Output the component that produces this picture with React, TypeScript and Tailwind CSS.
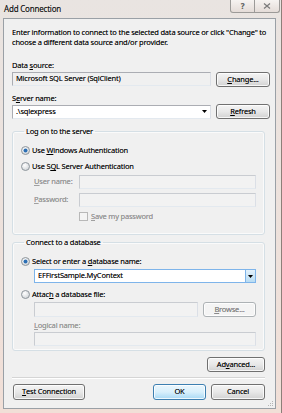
import React from "react";

const font = { fontFamily: '"Segoe UI", "Noto Sans", sans-serif' };

function Radio({ checked }: { checked?: boolean }) {
  return (
    <svg width="9" height="9" viewBox="0 0 9 9" className="shrink-0">
      <defs>
        <radialGradient id={checked ? "rc" : "ru"} cx="0.4" cy="0.35" r="0.7">
          <stop offset="0" stopColor="#ffffff" />
          <stop offset="1" stopColor="#cfd3d7" />
        </radialGradient>
      </defs>
      <circle cx="4.5" cy="4.5" r="4" fill={checked ? "url(#rc)" : "url(#ru)"} stroke="#8f969d" strokeWidth="1" />
      {checked && <circle cx="4.5" cy="4.5" r="2" fill="#2c6fb4" />}
    </svg>
  );
}

function Btn({
  children,
  className = "",
  variant = "normal",
}: {
  children: React.ReactNode;
  className?: string;
  variant?: "normal" | "default" | "disabled";
}) {
  const styles =
    variant === "default"
      ? "border-[#3c7fb1] bg-gradient-to-b from-[#eaf6fd] via-[#d9f0fc] to-[#a7d9f5] text-black"
      : variant === "disabled"
      ? "border-[#adb2b5] bg-[#f4f4f4] text-[#8a8a8a]"
      : "border-[#707070] bg-gradient-to-b from-[#f4f4f4] via-[#e8e8e8] to-[#d2d2d2] text-black";
  return (
    <div
      className={`flex items-center justify-center whitespace-nowrap rounded-[3px] border shadow-[inset_0_0_0_1px_rgba(255,255,255,0.8)] leading-none ${styles} ${className}`}
    >
      {children}
    </div>
  );
}

function Box({ className = "", children }: { className?: string; children?: React.ReactNode }) {
  return (
    <div
      className={`flex items-center border border-[#abadb3] border-r-[#dbdfe6] border-b-[#e3e9ef] text-black px-[3px] ${className}`}
    >
      {children}
    </div>
  );
}

function Arrow() {
  return (
    <svg width="5" height="3" viewBox="0 0 5 3" className="shrink-0">
      <polygon points="0,0 5,0 2.5,3" fill="#000" />
    </svg>
  );
}

export default function App() {
  return (
    <div
      className="flex h-[413px] w-[282px] flex-col overflow-hidden border-r border-r-[#8d7f79] bg-gradient-to-b from-[#e9e4e1] to-[#f1dfd7] text-[7.5px] tracking-[-0.2px] text-black [text-shadow:0_0_0.4px_rgba(0,0,0,0.45)]"
      style={font}
    >
      {/* title bar */}
      <div className="flex h-[18px] shrink-0 items-start justify-between">
        <div className="pl-[4px] pt-[3px] text-[8px] leading-[12px] text-[#1a1a1a]">Add Connection</div>
        <div className="mr-[1px] flex">
          <div className="flex h-[13px] w-[25px] items-center justify-center rounded-bl-[3px] border border-t-0 border-[#9c9a98] bg-gradient-to-b from-[#f6f3f1] to-[#e4dcd8] text-[8px] font-bold text-[#6b6b6b]">
            ?
          </div>
          <div className="flex h-[13px] w-[25px] items-center justify-center rounded-br-[3px] border border-l-0 border-t-0 border-[#9c9a98] bg-gradient-to-b from-[#f6f3f1] to-[#e4dcd8]">
            <svg width="8" height="6" viewBox="0 0 8 6">
              <path d="M1 0.5 L7 5.5 M7 0.5 L1 5.5" stroke="#7a7a7a" strokeWidth="1.2" />
            </svg>
          </div>
        </div>
      </div>

      <div className="flex flex-1">
        {/* client area */}
        <div className="relative ml-[3px] mr-[5px] flex-1 border border-[#9aa0a6] bg-[#f0f0f0] pl-[8px] pr-[5px]">
          <p className="pt-[8px] pr-[3px] leading-[10px]">
            Enter information to connect to the selected data source or click "Change" to choose a different data
            source and/or provider.
          </p>

          <div className="mt-[13px] h-[10px] leading-[10px]">
            Data <span className="underline">s</span>ource:
          </div>
          <div className="mt-[2px] flex h-[15px] items-start gap-[5px]">
            <Box className="h-[14px] w-[199px] bg-[#f0f0f0]">Microsoft SQL Server (SqlClient)</Box>
            <Btn className="h-[15px] w-[54px]">
              <span className="underline">C</span>hange...
            </Btn>
          </div>

          <div className="mt-[6px] h-[10px] leading-[10px]">
            S<span className="underline">e</span>rver name:
          </div>
          <div className="mt-[1px] flex h-[15px] items-center gap-[5px]">
            <Box className="h-[14px] w-[199px] justify-between bg-white pr-[3px]">
              <span>.\sqlexpress</span>
              <Arrow />
            </Box>
            <Btn className="h-[15px] w-[54px]">
              <span className="underline">R</span>efresh
            </Btn>
          </div>

          <fieldset className="mt-[7px] mr-[5px] rounded-[3px] border border-[#d5dfe5] pb-[13px] pl-[8px] pr-[8px] shadow-[inset_0_0_0_1px_#fafafa]">
            <legend className="ml-[3px] px-[2px] leading-[10px]">Log on to the server</legend>
            <div className="mt-[9px] flex h-[10px] items-center gap-[2px] leading-[10px]">
              <Radio checked />
              <span>
                Use <span className="underline">W</span>indows Authentication
              </span>
            </div>
            <div className="mt-[6px] flex h-[10px] items-center gap-[2px] leading-[10px]">
              <Radio />
              <span>
                Use S<span className="underline">Q</span>L Server Authentication
              </span>
            </div>
            <div className="mt-[4px] flex h-[14px] items-center">
              <span className="w-[58px] shrink-0 whitespace-nowrap pl-[13px] text-[#a0a0a0]">
                <span className="underline">U</span>ser name:
              </span>
              <Box className="h-[14px] flex-1 border-[#c9ccd1] bg-[#f2f2f2]" />
            </div>
            <div className="mt-[4px] flex h-[14px] items-center">
              <span className="w-[58px] shrink-0 whitespace-nowrap pl-[13px] text-[#a0a0a0]">
                <span className="underline">P</span>assword:
              </span>
              <Box className="h-[14px] flex-1 border-[#c9ccd1] bg-[#f2f2f2]" />
            </div>
            <div className="mt-[4px] flex h-[10px] items-center gap-[3px] pl-[58px] leading-[10px] text-[#a0a0a0]">
              <div className="h-[9px] w-[9px] border border-[#b8b8b8] bg-[#f4f4f4]" />
              <span>
                <span className="underline">S</span>ave my password
              </span>
            </div>
          </fieldset>

          <fieldset className="mt-[2px] mr-[5px] rounded-[3px] border border-[#d5dfe5] pb-[4px] pl-[8px] pr-[8px] shadow-[inset_0_0_0_1px_#fafafa]">
            <legend className="ml-[3px] px-[2px] leading-[10px]">Connect to a database</legend>
            <div className="mt-[9px] flex h-[10px] items-center gap-[2px] leading-[10px]">
              <Radio checked />
              <span>
                Select or enter a <span className="underline">d</span>atabase name:
              </span>
            </div>
            <div className="mt-[3px] pl-[13px]">
              <div className="flex h-[14px] items-stretch border border-[#7eb4ea] bg-white">
                <span className="flex flex-1 items-center px-[3px]">EFFirstSample.MyContext</span>
                <span className="flex w-[10px] items-center justify-center border-l border-[#7eb4ea] bg-gradient-to-b from-[#e3f1fb] to-[#b8dcf3]">
                  <Arrow />
                </span>
              </div>
            </div>
            <div className="mt-[6px] flex h-[10px] items-center gap-[2px] leading-[10px]">
              <Radio />
              <span>
                Attac<span className="underline">h</span> a database file:
              </span>
            </div>
            <div className="mt-[3px] flex h-[15px] items-center gap-[5px] pl-[13px]">
              <Box className="h-[15px] flex-1 border-[#c9ccd1] bg-[#f2f2f2]" />
              <Btn variant="disabled" className="h-[15px] w-[53px]">
                <span className="underline">B</span>rowse...
              </Btn>
            </div>
            <div className="mt-[3px] h-[10px] pl-[13px] leading-[10px] text-[#a0a0a0]">
              <span className="underline">L</span>ogical name:
            </div>
            <div className="mt-[2px] pl-[13px]">
              <Box className="h-[14px] border-[#c9ccd1] bg-[#f2f2f2]" />
            </div>
          </fieldset>

          <div className="mt-[6px] flex justify-end pr-[5px]">
            <Btn className="h-[15px] w-[58px]">
              Ad<span className="underline">v</span>anced...
            </Btn>
          </div>

          <div className="mt-[5px] mr-[5px] h-[2px] border-t border-[#d5d5d5] border-b border-b-white" />

          <div className="mt-[5px] flex h-[16px] items-center pr-[5px]">
            <Btn className="ml-[1px] h-[16px] w-[72px]">
              <span className="underline">T</span>est Connection
            </Btn>
            <div className="flex-1" />
            <Btn variant="default" className="h-[16px] w-[53px]">
              OK
            </Btn>
            <Btn className="ml-[5px] h-[16px] w-[54px]">Cancel</Btn>
          </div>

          {/* size grip */}
          <svg width="6" height="6" viewBox="0 0 6 6" className="absolute bottom-[1px] right-[1px]">
            <rect x="4" y="0" width="1" height="1" fill="#b5b5b5" />
            <rect x="2" y="2" width="1" height="1" fill="#b5b5b5" />
            <rect x="4" y="2" width="1" height="1" fill="#b5b5b5" />
            <rect x="0" y="4" width="1" height="1" fill="#b5b5b5" />
            <rect x="2" y="4" width="1" height="1" fill="#b5b5b5" />
            <rect x="4" y="4" width="1" height="1" fill="#b5b5b5" />
          </svg>
        </div>
      </div>
      <div className="h-[4px] shrink-0" />
    </div>
  );
}
